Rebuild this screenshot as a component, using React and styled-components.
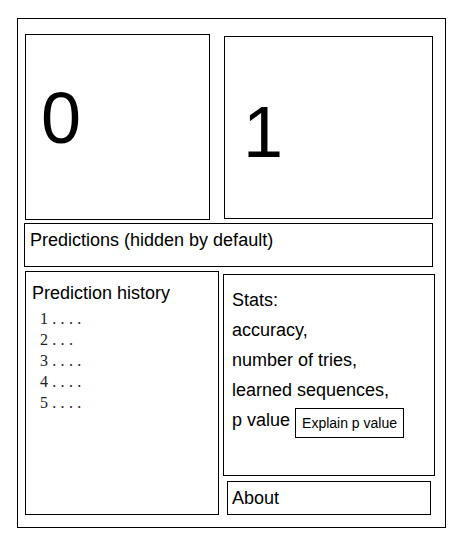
import React from 'react';
import styled, { createGlobalStyle, css } from 'styled-components';

const GlobalStyle = createGlobalStyle`
  html, body {
    margin: 0;
    padding: 0;
    background: #fff;
  }
  body {
    font-family: 'Liberation Sans', Arial, sans-serif;
    color: #000;
  }
`

const outline = css`
  box-sizing: border-box;
  border: 1px solid #000;
  background: #fff;
`

const Page = styled.div`
  padding: 18px 0 0 17px;
`

const Frame = styled.div`
  ${outline};
  width: 429px;
  height: 510px;
  display: flex;
  flex-direction: column;
`

const Row = styled.div`
  display: flex;
  align-items: flex-start;
`

const DigitPanel = styled.div`
  ${outline};
  width: ${p => p.$w}px;
  height: ${p => p.$h}px;
  margin: ${p => p.$mt}px 0 0 ${p => p.$ml}px;
  padding: ${p => p.$pt}px 0 0 ${p => p.$pl}px;
  font-size: 72px;
  line-height: 1;
`

const Banner = styled.div`
  ${outline};
  width: 409px;
  height: 44px;
  margin: 3px 0 0 6px;
  padding: 6px 0 0 5px;
  font-size: 18px;
  line-height: 20.7px;
`

const HistoryPanel = styled.div`
  ${outline};
  width: 194px;
  height: 244px;
  margin: 4px 0 0 7px;
  padding: 11px 0 0 6px;
`

const PanelTitle = styled.div`
  font-size: 18px;
  line-height: 20.7px;
`

const HistoryList = styled.ol`
  list-style: none;
  margin: 4px 0 0 8px;
  padding: 0;
  font-family: 'Liberation Serif', 'Times New Roman', serif;
  font-size: 16px;
  line-height: 21px;
  letter-spacing: 4.3px;
  color: #222;
`

const SideColumn = styled.div`
  display: flex;
  flex-direction: column;
  align-items: flex-start;
`

const StatsPanel = styled.div`
  ${outline};
  width: 212px;
  height: 202px;
  margin: 7px 0 0 4px;
  padding: 10px 0 0 8px;
  font-size: 18px;
`

const StatLine = styled.div`
  display: flex;
  align-items: flex-start;
  gap: 5px;
  line-height: 30px;
  white-space: nowrap;
`

const ExplainButton = styled.button`
  box-sizing: border-box;
  margin-top: 3px;
  height: 30px;
  padding: 0 6px;
  border: 1px solid #000;
  border-radius: 0;
  background: #fff;
  color: #000;
  font-family: 'Liberation Sans', Arial, sans-serif;
  font-size: 14px;
  line-height: 16px;
  cursor: pointer;
`

const AboutBar = styled.div`
  ${outline};
  width: 204px;
  height: 34px;
  margin: 5px 0 0 8px;
  padding: 6px 0 0 4px;
  font-size: 18px;
  line-height: 20.7px;
`

const history = ['1....', '2...', '3....', '4....', '5....'];
const stats = ['Stats:', 'accuracy,', 'number of tries,', 'learned sequences,'];

export default function App() {
  return (
    <>
      <GlobalStyle />
      <Page>
        <Frame>
          <Row>
            <DigitPanel $w={185} $h={186} $mt={15} $ml={7} $pt={47} $pl={15}>0</DigitPanel>
            <DigitPanel $w={209} $h={183} $mt={17} $ml={14} $pt={59} $pl={18}>1</DigitPanel>
          </Row>
          <Banner>Predictions (hidden by default)</Banner>
          <Row>
            <HistoryPanel>
              <PanelTitle>Prediction history</PanelTitle>
              <HistoryList>
                {history.map((item, i) => (
                  <li key={i}>{item}</li>
                ))}
              </HistoryList>
            </HistoryPanel>
            <SideColumn>
              <StatsPanel>
                {stats.map(s => (
                  <StatLine key={s}>{s}</StatLine>
                ))}
                <StatLine>
                  p value
                  <ExplainButton>Explain p value</ExplainButton>
                </StatLine>
              </StatsPanel>
              <AboutBar>About</AboutBar>
            </SideColumn>
          </Row>
        </Frame>
      </Page>
    </>
  );
}
